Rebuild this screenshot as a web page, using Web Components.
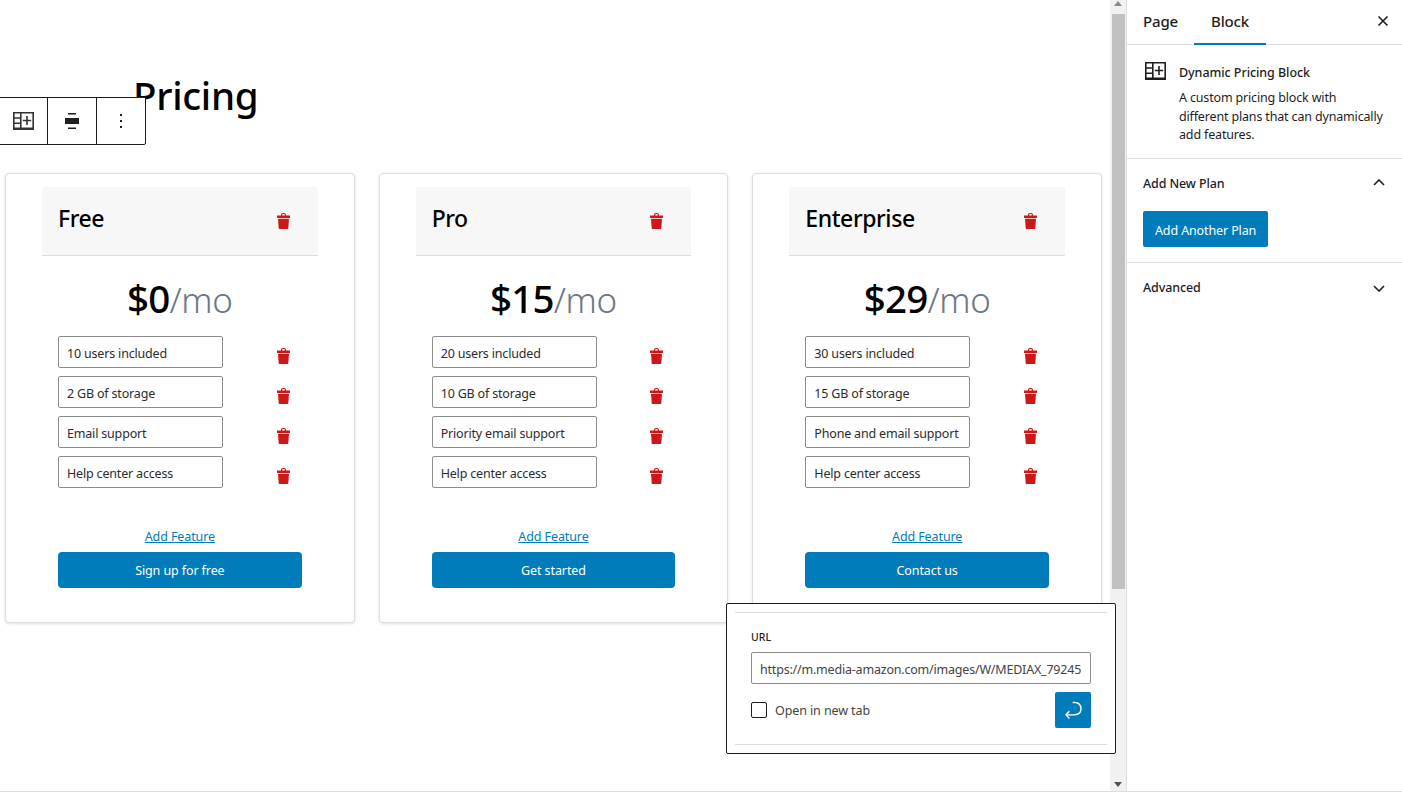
<!DOCTYPE html>
<html lang="en"><head><meta charset="utf-8"><title>Pricing</title>
<style>
html,body{margin:0;height:100%;background:#fff}
body{font-family:"Noto Sans","Open Sans",sans-serif;color:#1e1e1e;overflow:hidden}
</style></head><body>
<editor-app>
  <h1 slot="title">Pricing</h1>
  <pricing-card slot="cards" plan="Free" price="$0" cta="Sign up for free" features="10 users included|2 GB of storage|Email support|Help center access"></pricing-card>
  <pricing-card slot="cards" plan="Pro" price="$15" cta="Get started" features="20 users included|10 GB of storage|Priority email support|Help center access"></pricing-card>
  <pricing-card slot="cards" plan="Enterprise" price="$29" cta="Contact us" features="30 users included|15 GB of storage|Phone and email support|Help center access"></pricing-card>
</editor-app>
<script>
const BLOCK_ICON=(w,h)=>`<svg width="${w}" height="${h}" viewBox="0 0 21 18" fill="none" stroke="currentColor" stroke-width="1.6" style="display:block"><path d="M.8.8h19.400v16H.8zM.8 6h7M.8 11.300h7M7.800.8v16M14 4v9M9.800 8.500h8.400"/><path d="M0 15.500h21V18H0z" fill="currentColor" stroke="none"/></svg>`;
function def(name,css,html){
  customElements.define(name,class extends HTMLElement{
    connectedCallback(){
      if(this.shadowRoot)return;
      const s=this.attachShadow({mode:'open'});
      s.innerHTML=`<style>${css}</style>`+(typeof html==='function'?html(this):html);
    }
  });
}
def('trash-icon',`:host{display:block;width:13px;height:16px;color:#cc1818}svg{display:block}`,
`<svg width="13" height="16" viewBox="0 0 13 16" fill="currentColor"><path d="M4 3V2C4 .8 4.800 0 6 0h1c1.200 0 2 .8 2 2v1H7.800V2c0-.5-.3-.9-.8-.9H6c-.5 0-.8.4-.8.900v1z"/><path d="M0 2.500h13V5H0z"/><path d="M1 5.800h11L11.300 15c0 .6-.4 1-1 1H2.700c-.6 0-1-.4-1-1z"/></svg>`);
def('feature-row',`:host{display:flex;align-items:center;height:32px}
.f{box-sizing:border-box;width:165px;height:32px;border:1px solid #8d8d8d;border-radius:2px;padding:0 8px;font-size:12.500px;line-height:33px;white-space:nowrap;overflow:hidden;color:#2c2c2c;letter-spacing:-.18px}
trash-icon{margin:8px 0 0 53.700px}`,
`<div class="f"><slot></slot></div><trash-icon></trash-icon>`);
def('pricing-card',`:host{display:block;box-sizing:border-box;height:450px;background:#fff;border:1px solid #ddd;border-radius:4px;box-shadow:0 1px 3px rgba(0,0,0,.12);padding:13px 36px 0}
.head{display:flex;justify-content:space-between;align-items:center;height:69px;box-sizing:border-box;background:#f7f7f7;border-bottom:1px solid #ddd;border-radius:2px 2px 0 0;padding:0 28px 0 16px}
.head h2{margin:0;font-size:23px;font-weight:500;line-height:1;color:#000;position:relative;top:-3px;letter-spacing:-.42px}
.price{height:80px;display:flex;justify-content:center;align-items:center;line-height:1;color:#000;padding-top:5px;box-sizing:border-box}
.price b{font-size:38.500px;font-weight:500;letter-spacing:-.8px}
.price span{color:#6c7781;font-weight:300;font-size:35px;letter-spacing:-.3px;position:relative;top:.5px}
.rows{display:flex;flex-direction:column;gap:8px;padding-left:16px}
.add{margin-top:40px;text-align:center;font-size:12.500px;line-height:18px;color:#007cba;text-decoration:underline;letter-spacing:-.1px}
.btn{margin:6px 16px 0;height:36px;background:#007cba;color:#fff;border-radius:4px;display:flex;align-items:center;justify-content:center;font-size:12.500px;letter-spacing:-.1px}`,
h=>`<div class="head"><h2>${h.getAttribute('plan')}</h2><trash-icon></trash-icon></div>
<div class="price"><b>${h.getAttribute('price')}</b><span>/mo</span></div>
<div class="rows">${h.getAttribute('features').split('|').map(f=>`<feature-row>${f}</feature-row>`).join('')}</div>
<div class="add">Add Feature</div><div class="btn">${h.getAttribute('cta')}</div>`);
def('block-toolbar',`:host{position:absolute;left:-1px;top:97px;display:flex;height:48px;box-sizing:border-box;background:#fff;border:1px solid #1e1e1e;border-radius:0 0 2px 0}
.b{box-sizing:border-box;width:49px;display:flex;align-items:center;justify-content:center;border-right:1px solid #1e1e1e;color:#333}
.b.s{width:48px}
.b:last-child{border-right:0}`,
`<div class="b s">${BLOCK_ICON(21,18)}</div>
<div class="b"><svg width="14" height="16" viewBox="0 0 14 16" fill="#1e1e1e"><path d="M3 0h8v1.500H3zM0 5h14v6H0zM3 14.500h8V16H3z"/></svg></div>
<div class="b s"><svg width="2" height="14" viewBox="0 0 2 14" fill="#1e1e1e"><path d="M0 0h2v2H0zM0 6h2v2H0zM0 12h2v2H0z"/></svg></div>`);
def('link-popover',`:host{position:absolute;left:726px;top:603px;box-sizing:border-box;width:390px;height:151px;background:#fff;border:1px solid #1e1e1e;border-radius:2px;font-size:12.500px;padding:8px 8px 0}
.in{box-sizing:border-box;height:133px;border-top:1px solid #ddd;border-bottom:1px solid #ddd;padding:16px 16px 0}
.l{font-size:10.500px;line-height:16px;font-weight:500;color:#1e1e1e}
.u{box-sizing:border-box;height:32px;margin-top:7px;border:1px solid #8d8d8d;border-radius:2px;padding:0 8px;line-height:33px;color:#444;letter-spacing:-.2px}
.u div{overflow:hidden;white-space:nowrap}
.r{display:flex;align-items:center;margin-top:8px;height:36px}
.c{box-sizing:border-box;width:16px;height:16px;border:1px solid #1e1e1e;border-radius:2px;margin-right:8px}
.t{flex:1;color:#444;letter-spacing:-.1px}
.go{width:36px;height:36px;background:#007cba;border-radius:2px;display:flex;align-items:center;justify-content:center}`,
`<div class="in"><div class="l">URL</div><div class="u"><div>https://m.media-amazon.com/images/W/MEDIAX_79245</div></div>
<div class="r"><div class="c"></div><div class="t">Open in new tab</div><div class="go"><svg width="24" height="24" viewBox="0 0 24 24" fill="#fff"><path d="M6.734 16.106l2.176-2.38-1.093-1.028-3.846 4.158 3.846 4.157 1.093-1.027-2.176-2.380h2.811c1.125 0 2.250.03 3.374 0 1.428-.001 3.362-.25 4.963-1.277 1.660-1.065 2.868-2.906 2.868-5.859 0-2.479-1.327-4.896-3.650-5.930-1.820-.813-3.044-.8-4.806-.788l-.567.002v1.500c.184 0 .368 0 .553-.002 1.820-.007 2.704-.014 4.210.657 1.854.827 2.760 2.657 2.760 4.561 0 2.472-.973 3.824-2.191 4.608-1.270.817-2.862 1.093-4.158 1.093h-8.565z"/></svg></div></div></div>`);
def('side-panel',`:host{display:block;width:276px;box-sizing:border-box;border-left:1px solid #ddd;height:100%;font-size:12.500px;color:#1e1e1e}
.tabs{display:flex;align-items:center;height:45px;box-sizing:border-box;border-bottom:1px solid #ddd;position:relative;padding-left:16px;font-size:15px;font-weight:500;letter-spacing:-.15px}
.tabs .p{width:51px;margin-bottom:2px}.tabs .a{margin-bottom:2px;margin-left:17px}
.tabs i{position:absolute;left:67px;bottom:-1px;width:72px;height:2px;background:#007cba}
.tabs svg{position:absolute;right:13px;top:15px}
.card{display:flex;box-sizing:border-box;height:114px;border-bottom:1px solid #ddd;padding:18px 16px 0}
.ic{width:21px;margin:-1px 13px 0 2px;color:#1e1e1e}
.ct{font-weight:500;line-height:20px;margin-bottom:6px;letter-spacing:-.06px}
.d{line-height:18.500px;letter-spacing:-.16px}
.sec{border-bottom:1px solid #ddd;padding:0 16px}
.sh{display:flex;justify-content:space-between;align-items:center;height:50px;box-sizing:border-box;padding-bottom:2px;font-weight:500;letter-spacing:-.12px}
.sh svg{margin-right:1px;margin-top:-1px}
.sec:last-child .sh svg{margin-top:2px}
.bt{display:inline-flex;align-items:center;box-sizing:border-box;height:36px;padding:5px 12px 0;background:#007cba;color:#fff;border-radius:2px;margin:2px 0 15px;letter-spacing:-.12px;line-height:1}
.sec:last-child{border:0}`,
`<div class="tabs"><span class="p">Page</span><span class="a">Block</span><i></i><svg width="12" height="12" viewBox="0 0 12 12" stroke="#1e1e1e" stroke-width="1.600"><path d="M1.500 1.500l9 9M10.500 1.500l-9 9"/></svg></div>
<div class="card"><div class="ic">${BLOCK_ICON(21,18)}</div><div><div class="ct">Dynamic Pricing Block</div><div class="d">A custom pricing block with<br>different plans that can dynamically<br>add features.</div></div></div>
<div class="sec"><div class="sh"><span>Add New Plan</span><svg width="12" height="7" viewBox="0 0 12 7" fill="none" stroke="#1e1e1e" stroke-width="1.600"><path d="M1 6l5-5 5 5"/></svg></div><div class="bt">Add Another Plan</div></div>
<div class="sec"><div class="sh"><span>Advanced</span><svg width="12" height="7" viewBox="0 0 12 7" fill="none" stroke="#1e1e1e" stroke-width="1.600"><path d="M1 1l5 5 5-5"/></svg></div></div>`);
def('editor-scrollbar',`:host{display:block;width:16px;height:100%;background:#f1f1f1;position:relative;flex:none}
.t{position:absolute;left:2px;right:1px;top:14px;height:575px;background:#c1c1c1}
.u,.d{position:absolute;left:4px;width:0;height:0;border:4px solid transparent}
.u{top:1px;border-bottom-color:#8a8a8a;border-top-width:0;border-bottom-width:5px}
.d{bottom:4px;border-top-color:#505050;border-bottom-width:0;border-top-width:5px}`,
`<div class="u"></div><div class="t"></div><div class="d"></div>`);
def('editor-app',`:host{display:flex;height:792px;box-sizing:border-box;border-bottom:1px solid #ddd}
.main{position:relative;z-index:1;width:1110px;flex:none;height:100%}
::slotted(h1){margin:0;padding:69px 0 0 133px;height:173px;box-sizing:border-box;font-size:38.500px;line-height:52px;font-weight:500;color:#000;letter-spacing:-.3px}
.cards{display:grid;grid-template-columns:repeat(3,1fr);gap:24px;margin:0 8px 0 5px}`,
`<div class="main"><slot name="title"></slot><div class="cards"><slot name="cards"></slot></div><block-toolbar></block-toolbar><link-popover></link-popover></div><editor-scrollbar></editor-scrollbar><side-panel></side-panel>`);
</script>
</body></html>
